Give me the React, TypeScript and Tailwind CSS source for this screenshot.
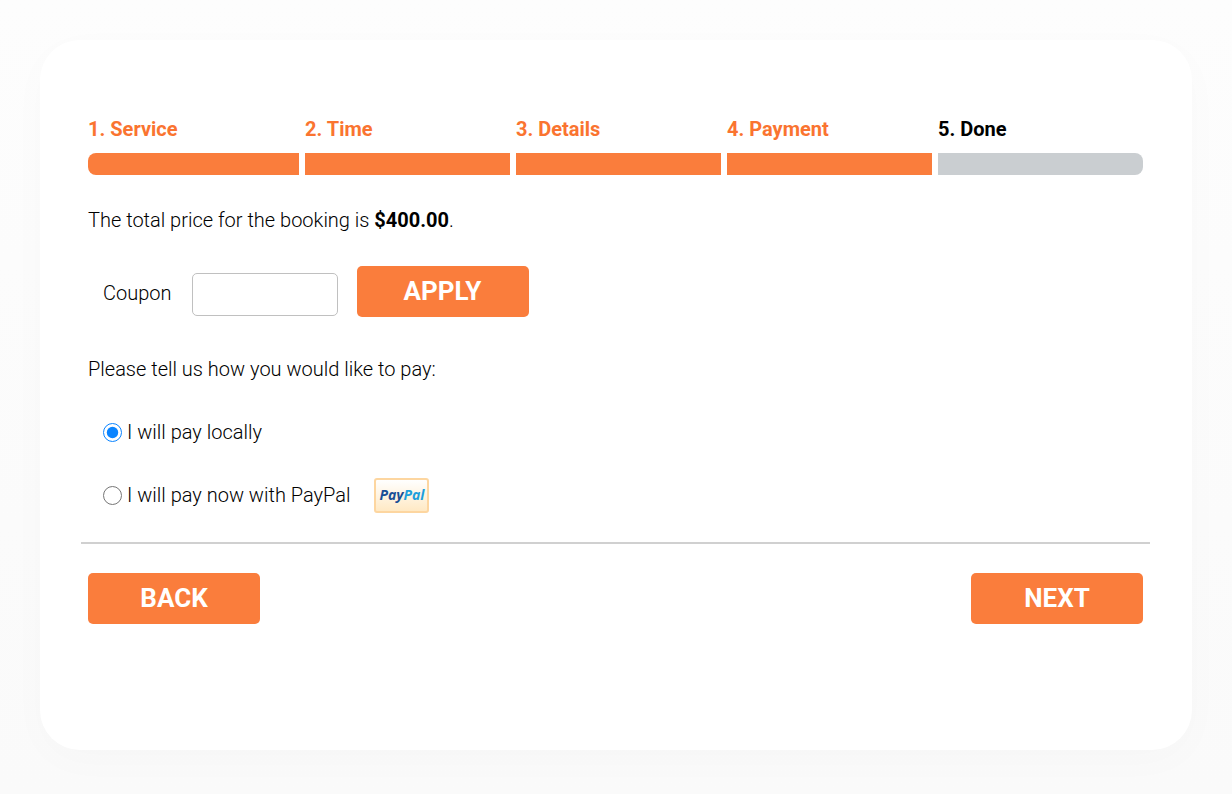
import { useState } from "react";
import { clsx } from "clsx";

const steps = ["Service", "Time", "Details", "Payment", "Done"];
const currentStep = 4;

const buttonClass =
  "h-[51px] w-[172px] cursor-pointer rounded-[5px] bg-[#fa7d3c] pb-px text-[26px] font-bold text-white uppercase";

function Steps() {
  return (
    <ol className="grid grid-cols-5">
      {steps.map((step, i) => (
        <li
          key={step}
          className={clsx(
            "text-xl leading-6 font-bold",
            i > 0 && "pl-1.5",
            i < currentStep ? "text-[#fa7430]" : "text-black",
          )}
        >
          {i + 1}. {step}
          <div
            className={clsx(
              "mt-3 h-[22px]",
              i < currentStep ? "bg-[#fa7d3c]" : "bg-[#caced1]",
              i === 0 && "rounded-l-lg",
              i === steps.length - 1 && "rounded-r-lg",
            )}
          />
        </li>
      ))}
    </ol>
  );
}

function PayPalBadge() {
  return (
    <span className="ml-6 flex h-[35px] w-[55px] items-center justify-center rounded-[3px] border-2 border-[#fdd6a0] bg-linear-to-b from-white to-[#ffe9c4] font-['Open_Sans',sans-serif] text-sm leading-none font-bold text-[#1a4f96] italic">
      Pay<span className="text-[#1d9fdc]">Pal</span>
    </span>
  );
}

export default function App() {
  const [method, setMethod] = useState("local");
  const [coupon, setCoupon] = useState("");

  return (
    <div className="min-h-screen bg-linear-to-b from-[#fdfdfd] to-[#fafafa] p-10 pb-11 font-[Roboto,sans-serif] text-xl font-light text-black">
      <main className="min-h-[710px] rounded-[40px] bg-white pt-[77px] pr-[49px] pl-12 shadow-[0_10px_40px_rgba(0,0,0,0.02)]">
        <Steps />

        <p className="mt-[31px] leading-7">
          The total price for the booking is{" "}
          <strong className="font-bold">$400.00</strong>.
        </p>

        <div className="mt-8 ml-[15px] flex items-center">
          <label htmlFor="coupon" className="mr-5 pt-0.5">
            Coupon
          </label>
          <input
            id="coupon"
            type="text"
            value={coupon}
            onChange={(e) => setCoupon(e.target.value)}
            className="mt-1.5 h-[43px] w-[146px] rounded-[5px] border border-[#c0c0c0] bg-white px-3"
          />
          <button type="button" className={clsx(buttonClass, "ml-[19px]")}>
            Apply
          </button>
        </div>

        <fieldset className="mt-[38px]">
          <legend className="leading-7">
            Please tell us how you would like to pay:
          </legend>
          <label className="mt-[31px] ml-[15px] flex h-9 items-center">
            <input
              type="radio"
              name="payment"
              checked={method === "local"}
              onChange={() => setMethod("local")}
              className="mr-[5px] size-[19px] accent-[#0a84ff]"
            />
            I will pay locally
          </label>
          <label className="mt-[27px] ml-[15px] flex h-9 items-center">
            <input
              type="radio"
              name="payment"
              checked={method === "paypal"}
              onChange={() => setMethod("paypal")}
              className="mr-[5px] size-[19px] accent-[#0a84ff]"
            />
            I will pay now with PayPal
            <PayPalBadge />
          </label>
        </fieldset>

        <hr className="-mx-[7px] mt-[29px] border-t-2 border-[#d0d0d0]" />

        <div className="mt-[29px] flex justify-between">
          <button type="button" className={buttonClass}>
            Back
          </button>
          <button type="button" className={buttonClass}>
            Next
          </button>
        </div>
      </main>
    </div>
  );
}
